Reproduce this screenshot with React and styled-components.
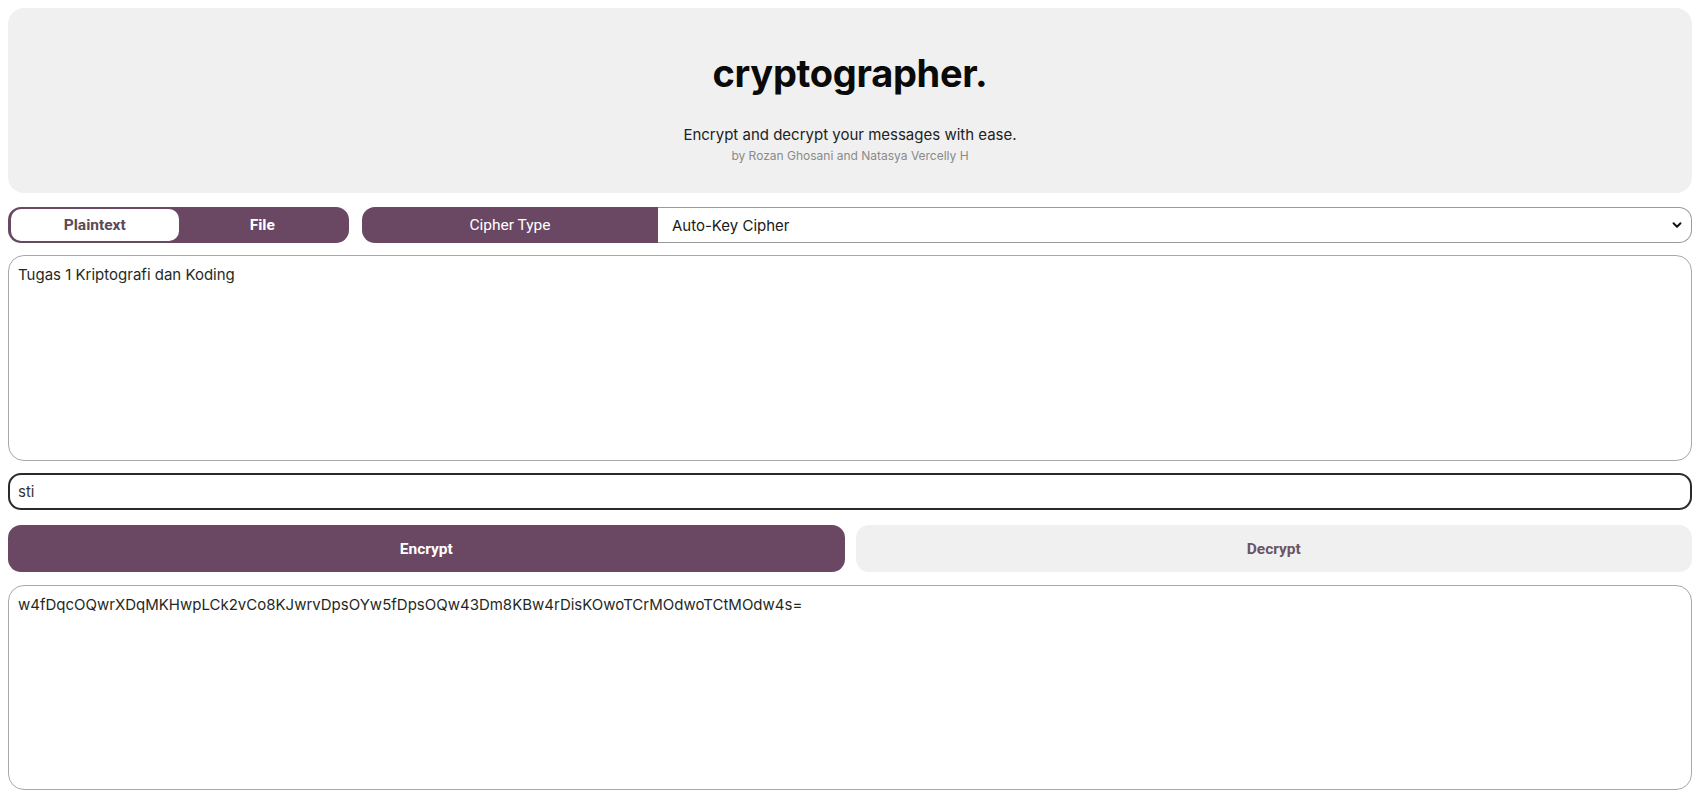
import React, { useState } from "react";
import styled, { createGlobalStyle } from "styled-components";
import { ChevronDown } from "lucide-react";

const PURPLE = "#6a4762";

const Global = createGlobalStyle`
  * { box-sizing: border-box; }
  html, body { margin: 0; padding: 0; background: #ffffff; }
  body { font-family: Inter, "Noto Sans", sans-serif; color: #1a1a1a; }
`;

const Page = styled.main`
  display: flex;
  flex-direction: column;
  padding: 8px 8px 8px 8px;
  gap: 12px;
`;

const Header = styled.header`
  height: 185px;
  background: #f0f0f0;
  border-radius: 16px;
  display: flex;
  flex-direction: column;
  align-items: center;
  padding-top: 45px;
  margin-bottom: 2px;
`;

const Title = styled.h1`
  margin: 0;
  font-family: Inter, sans-serif;
  font-weight: 700;
  font-size: 38px;
  line-height: 40px;
  letter-spacing: -0.3px;
  color: #0a0a0a;
`;

const Subtitle = styled.p`
  margin: 32px 0 0;
  font-size: 15px;
  line-height: 20px;
  color: #222;
`;

const Authors = styled.p`
  margin: 3px 0 0;
  font-size: 12px;
  line-height: 16px;
  color: #8a8a8a;
`;

const ControlRow = styled.div`
  display: flex;
  gap: 13px;
  height: 36px;
`;

const Toggle = styled.div`
  width: 341px;
  flex: none;
  display: grid;
  grid-template-columns: 1fr 1fr;
  background: ${PURPLE};
  border-radius: 13px;
  padding: 2px 3px;
`;

const ToggleOption = styled.button`
  border: none;
  border-radius: 10px;
  background: ${(p) => (p.$active ? "#ffffff" : "transparent")};
  color: ${(p) => (p.$active ? "#5b4a56" : "#ffffff")};
  font-family: Roboto, "Liberation Sans", sans-serif;
  font-weight: 700;
  font-size: 15.5px;
  cursor: pointer;
  padding: 0;
`;

const CipherGroup = styled.div`
  flex: 1;
  display: flex;
`;

const CipherLabel = styled.div`
  width: 296px;
  flex: none;
  background: ${PURPLE};
  color: #fff;
  border-radius: 13px 0 0 13px;
  display: flex;
  align-items: center;
  justify-content: center;
  font-family: Roboto, "Liberation Sans", sans-serif;
  font-size: 15.5px;
`;

const SelectWrap = styled.div`
  position: relative;
  flex: 1;
  display: flex;
`;

const Select = styled.select`
  flex: 1;
  appearance: none;
  border: 1px solid #9a9a9a;
  border-left: none;
  border-radius: 0 13px 13px 0;
  background: #fff;
  font-family: Inter, sans-serif;
  font-size: 15px;
  color: #1a1a1a;
  padding: 0 30px 0 14px;
  outline: none;
`;

const Chevron = styled.span`
  position: absolute;
  right: 8px;
  top: 50%;
  transform: translateY(-50%);
  display: flex;
  pointer-events: none;
  color: #111;
`;

const TextBox = styled.textarea`
  height: ${(p) => p.$h}px;
  resize: none;
  border: 1px solid #a8a8a8;
  border-radius: 16px;
  padding: 10px 9px;
  font-family: Inter, sans-serif;
  font-size: 15px;
  line-height: 18px;
  color: #1f2a1f;
  background: #fff;
  outline: none;
`;

const KeyInput = styled.input`
  height: 37px;
  border: 2px solid #2a2a2a;
  border-radius: 13px;
  padding: 0 8px;
  font-family: Inter, sans-serif;
  font-size: 15px;
  color: #333;
  outline: none;
  margin-bottom: 3px;
`;

const ButtonRow = styled.div`
  display: grid;
  grid-template-columns: 1fr 1fr;
  gap: 11px;
  height: 47px;
  margin-bottom: 1px;
`;

const ActionButton = styled.button`
  border: none;
  border-radius: 13px;
  background: ${(p) => (p.$primary ? PURPLE : "#f0f0f0")};
  color: ${(p) => (p.$primary ? "#ffffff" : "#6b5565")};
  font-family: Roboto, "Liberation Sans", sans-serif;
  font-weight: 700;
  font-size: 15.5px;
  cursor: pointer;
`;

export default function App() {
  const [mode, setMode] = useState("plaintext");
  return (
    <>
      <Global />
      <Page>
        <Header>
          <Title>cryptographer.</Title>
          <Subtitle>Encrypt and decrypt your messages with ease.</Subtitle>
          <Authors>by Rozan Ghosani and Natasya Vercelly H</Authors>
        </Header>
        <ControlRow>
          <Toggle>
            <ToggleOption $active={mode === "plaintext"} onClick={() => setMode("plaintext")}>
              Plaintext
            </ToggleOption>
            <ToggleOption $active={mode === "file"} onClick={() => setMode("file")}>
              File
            </ToggleOption>
          </Toggle>
          <CipherGroup>
            <CipherLabel>Cipher Type</CipherLabel>
            <SelectWrap>
              <Select defaultValue="autokey">
                <option value="vigenere">Vigenere Cipher</option>
                <option value="autokey">Auto-Key Cipher</option>
                <option value="playfair">Playfair Cipher</option>
              </Select>
              <Chevron>
                <ChevronDown size={14} strokeWidth={3.2} />
              </Chevron>
            </SelectWrap>
          </CipherGroup>
        </ControlRow>
        <TextBox $h={206} defaultValue="Tugas 1 Kriptografi dan Koding" />
        <KeyInput defaultValue="sti" />
        <ButtonRow>
          <ActionButton $primary>Encrypt</ActionButton>
          <ActionButton>Decrypt</ActionButton>
        </ButtonRow>
        <TextBox
          $h={205}
          readOnly
          defaultValue="w4fDqcOQwrXDqMKHwpLCk2vCo8KJwrvDpsOYw5fDpsOQw43Dm8KBw4rDisKOwoTCrMOdwoTCtMOdw4s="
        />
      </Page>
    </>
  );
}
